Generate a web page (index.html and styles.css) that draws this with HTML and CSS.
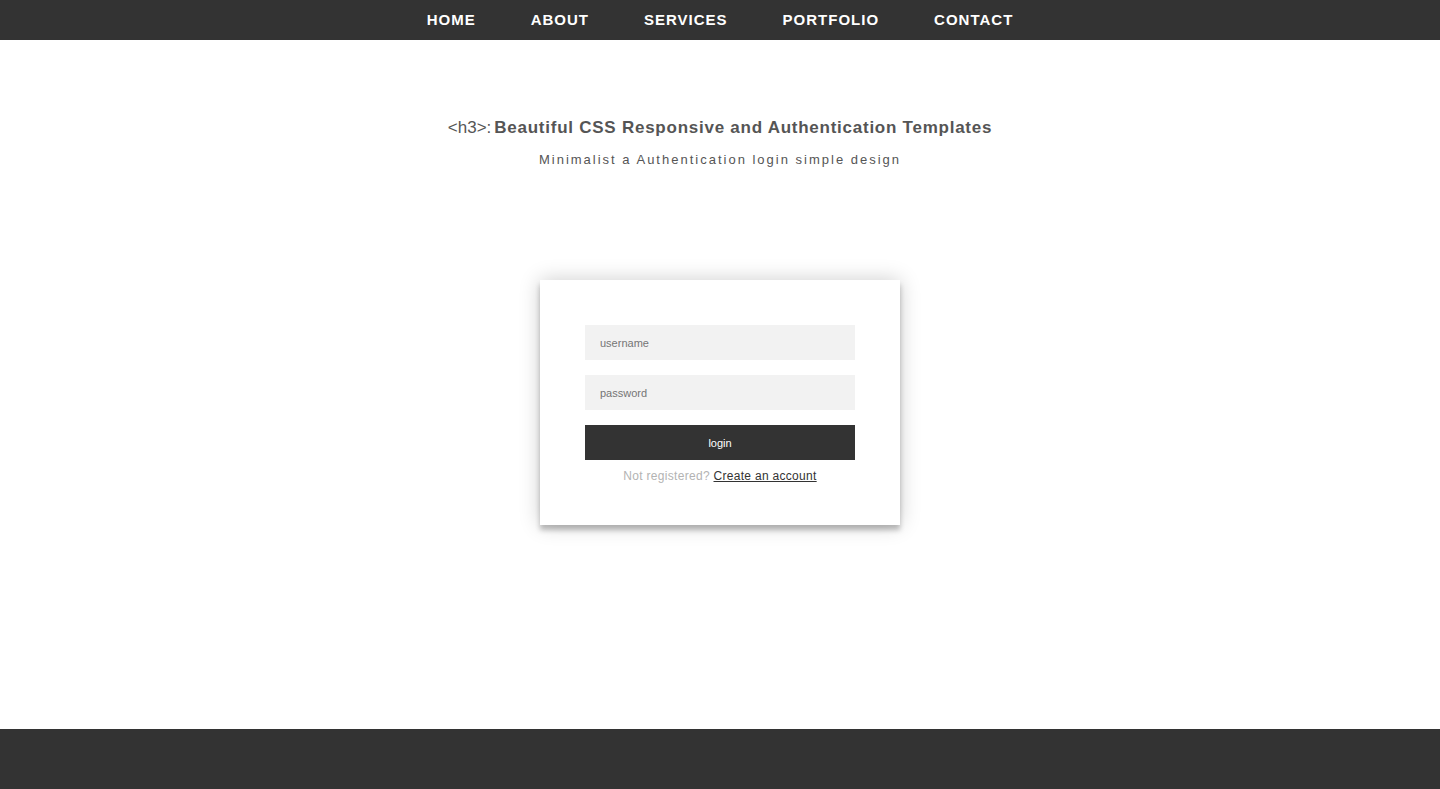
FILE: index.html
```html
<!DOCTYPE html>
<html lang="en">
<head>
<meta charset="utf-8">
<title>Login</title>
<link rel="stylesheet" href="styles.css">
</head>
<body>
<div class="page">
  <nav class="topnav">
    <a href="#">Home</a>
    <a href="#">About</a>
    <a href="#">Services</a>
    <a href="#">Portfolio</a>
    <a href="#">Contact</a>
  </nav>
  <main class="main">
    <h3 class="title"><span class="tag">&lt;h3&gt;:</span><b>Beautiful CSS Responsive and Authentication Templates</b></h3>
    <p class="subtitle">Minimalist a Authentication login simple design</p>
    <div class="card">
      <form class="login-form">
        <input class="field" type="text" placeholder="username">
        <input class="field" type="password" placeholder="password">
        <button class="btn" type="button">login</button>
        <p class="message">Not registered? <a href="#">Create an account</a></p>
      </form>
    </div>
  </main>
  <footer class="footer"></footer>
</div>
</body>
</html>
```
FILE: styles.css
```css
* { box-sizing: border-box; }
html, body { margin: 0; padding: 0; }
body {
  font-family: "Liberation Sans", Arial, sans-serif;
  background: #fff;
  color: #555;
}
.page {
  min-height: 100vh;
  display: flex;
  flex-direction: column;
}
.topnav {
  height: 40px;
  background: #333;
  display: flex;
  justify-content: center;
  align-items: center;
  gap: 55px;
  padding-bottom: 2px;
}
.topnav a {
  color: #fff;
  text-decoration: none;
  font-weight: bold;
  font-size: 15px;
  letter-spacing: 1px;
  text-transform: uppercase;
}
.main {
  flex: 1;
  display: flex;
  flex-direction: column;
  align-items: center;
  padding-top: 78px;
}
.title {
  margin: 0;
  font-size: 17px;
  line-height: 20px;
  color: #555;
  font-weight: normal;
}
.title .tag { margin-right: 3px; }
.title b { font-weight: bold; letter-spacing: 0.75px; }
.subtitle {
  margin: 15px 0 0;
  font-size: 13px;
  line-height: 14px;
  letter-spacing: 2px;
  color: #555;
}
.card {
  margin-top: 113px;
  width: 360px;
  background: #fff;
  padding: 45px 45px 42px;
  box-shadow: 0 0 20px 0 rgba(0,0,0,0.2), 0 5px 5px 0 rgba(0,0,0,0.24);
}
.login-form {
  display: flex;
  flex-direction: column;
  gap: 15px;
}
.field {
  height: 35px;
  border: 0;
  outline: 0;
  background: #f2f2f2;
  padding: 0 15px;
  font-family: "Liberation Sans", Arial, sans-serif;
  font-size: 11px;
  color: #333;
}
.field::placeholder { color: #757575; }
.btn {
  height: 35px;
  border: 0;
  background: #333;
  color: #fff;
  font-family: "Liberation Sans", Arial, sans-serif;
  font-size: 11px;
  cursor: pointer;
}
.message {
  margin: -6px 0 0;
  text-align: center;
  font-size: 12px;
  line-height: 14px;
  letter-spacing: 0.3px;
  color: #b3b3b3;
}
.message a {
  color: #333;
  text-decoration: underline;
}
.footer {
  height: 60px;
  background: #333;
}
```
